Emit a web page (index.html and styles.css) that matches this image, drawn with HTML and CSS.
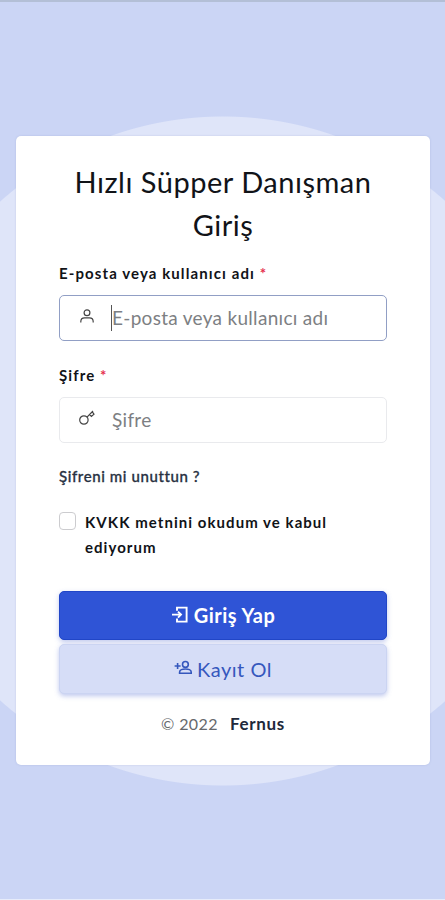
FILE: index.html
```html
<!DOCTYPE html>
<html lang="tr">
<head>
    <meta charset="UTF-8">
    <meta name="viewport" content="width=device-width, initial-scale=1.0">
    <title>Hızlı Süpper Danışman Giriş</title>
    <link rel="stylesheet" href="styles.css">
</head>
<body>
    <main class="login-page">
        <form class="login-card">
            <h1>Hızlı Süpper Danışman Giriş</h1>

            <label class="field-label label-user" for="username">E-posta veya kullanıcı adı <span class="required">*</span></label>
            <div class="input-box focused">
                <svg class="field-icon" viewBox="0 0 16 16">
                    <circle cx="8" cy="4.7" r="2.9"/>
                    <path d="M1.8 14.5v-.8c0-2.4 1.6-3.8 3.8-3.8h4.8c2.2 0 3.8 1.4 3.8 3.8v.8"/>
                </svg>
                <span class="caret"></span>
                <input id="username" type="text" placeholder="E-posta veya kullanıcı adı">
            </div>

            <label class="field-label label-pass" for="password">Şifre <span class="required">*</span></label>
            <div class="input-box">
                <svg class="field-icon" viewBox="0 0 16 16">
                    <circle cx="4.9" cy="10" r="4.2"/>
                    <path d="M8 7.1 14 1M10.6 4.6l1.8 1.9 2.6-2.3-1.7-2.4"/>
                </svg>
                <input id="password" type="password" placeholder="Şifre">
            </div>

            <a class="forgot" href="#">Şifreni mi unuttun ?</a>

            <div class="agreement">
                <input id="kvkk" type="checkbox">
                <label for="kvkk">KVKK metnini okudum ve kabul ediyorum</label>
            </div>

            <div class="buttons">
                <button class="btn btn-primary" type="button">
                    <svg class="btn-icon icon-login" viewBox="0 0 18 18">
                        <path d="M6 4.8V1.6h9.6v14H6v-3.2M1 8.6h8.6M7 5.6l3 3-3 3"/>
                    </svg>
                    <span>Giriş Yap</span>
                </button>
                <button class="btn btn-light" type="button">
                    <svg class="btn-icon icon-register" viewBox="0 0 18 18">
                        <circle cx="11.4" cy="5.4" r="2.9"/>
                        <path d="M5.6 14.2V13c0-1.8 2.8-3 5.8-3s5.8 1.2 5.8 3v1.2zM3.6 4v6M.6 7h6"/>
                    </svg>
                    <span>Kayıt Ol</span>
                </button>
            </div>

            <footer>
                <span>© 2022</span>
                <a href="#">Fernus</a>
            </footer>
        </form>
    </main>
</body>
</html>
```

FILE: styles.css
```css
/* General Reset */
* {
    margin: 0;
    padding: 0;
    box-sizing: border-box;
}

body {
    font-family: Lato, "Noto Sans", sans-serif;
    color: #111318;
}

/* Page background with the big circle */
.login-page {
    height: 900px;
    padding: 134px 15px 0 16px;
    border-top: 2px solid #b3bfd6;
    border-bottom: 1px solid #e7ecfa;
    background: radial-gradient(circle at 223px 449px, #dfe5f9 334px, #cbd5f5 335px);
}

/* Card */
.login-card {
    height: 629px;
    padding: 24px 43px 0;
    border-radius: 5px;
    background-color: #ffffff;
    box-shadow: 0 0 2px rgba(100, 115, 170, 0.25);
}

.login-card h1 {
    font-size: 29px;
    font-weight: 400;
    line-height: 43px;
    letter-spacing: 0.5px;
    text-align: center;
}

/* Form fields */
.field-label {
    display: block;
    font-size: 15px;
    font-weight: 700;
    line-height: 24px;
    letter-spacing: 1.1px;
}

.label-user {
    margin: 15px 0 10px;
}

.label-pass {
    margin: 22px 0 10px;
}

.required {
    color: #e5304f;
}

.input-box {
    display: flex;
    align-items: center;
    height: 46px;
    padding-left: 19px;
    border: 1px solid #e9eaed;
    border-radius: 5px;
}

.input-box.focused {
    border-color: #919fc5;
}

.field-icon {
    width: 16px;
    height: 16px;
    margin: 0 17px 4px 0;
    fill: none;
    stroke: #444444;
    stroke-width: 1.2;
}

.caret {
    width: 1px;
    height: 26px;
    margin: 0 0 1px -1px;
    background-color: #555555;
}

.input-box input {
    width: 260px;
    margin-bottom: 2px;
    border: none;
    outline: none;
    font-family: inherit;
    font-size: 19px;
    letter-spacing: 0.3px;
    background: transparent;
}

.input-box input::placeholder {
    color: #7d7f83;
}

.forgot {
    display: block;
    margin-top: 21px;
    color: #283142;
    font-size: 15px;
    font-weight: 500;
    line-height: 24px;
    letter-spacing: 0.6px;
    -webkit-text-stroke: 0.3px #283142;
    text-decoration: none;
}

/* Checkbox row */
.agreement {
    display: flex;
    gap: 9px;
    margin-top: 22px;
    font-size: 15px;
    font-weight: 700;
    line-height: 25px;
    letter-spacing: 1.05px;
}

.agreement input {
    appearance: none;
    flex: none;
    width: 17px;
    height: 18px;
    margin-top: 2px;
    border: 1px solid #cccccf;
    border-radius: 4px;
}

/* Buttons */
.buttons {
    display: grid;
    gap: 4px;
    margin-top: 31px;
}

.btn {
    display: flex;
    justify-content: center;
    align-items: center;
    height: 49px;
    border: 1px solid #2146c7;
    border-radius: 5px;
    font-family: inherit;
    font-size: 20px;
    letter-spacing: 0.5px;
    box-shadow: 0 2px 5px rgba(72, 98, 205, 0.35);
}

.btn-primary {
    color: #ffffff;
    background-color: #2f54d6;
    font-weight: 700;
}

.btn-light {
    height: 50px;
    border-color: #cbd4f2;
    color: #3557bd;
    background-color: #d6ddf7;
}

.btn span {
    margin-bottom: 1px;
}

.btn-icon {
    width: 18px;
    height: 18px;
    margin: 0 5px 2px 0;
    fill: none;
    stroke: currentColor;
    stroke-width: 1.9;
}

.icon-register {
    stroke-width: 1.6;
}

/* Footer */
footer {
    display: flex;
    justify-content: center;
    gap: 12px;
    margin-top: 18px;
    font-size: 16px;
    line-height: 24px;
    letter-spacing: 0.4px;
    color: #66686c;
}

footer a {
    color: #20283a;
    font-size: 17px;
    font-weight: 700;
    letter-spacing: 0.7px;
    text-decoration: none;
}
```
